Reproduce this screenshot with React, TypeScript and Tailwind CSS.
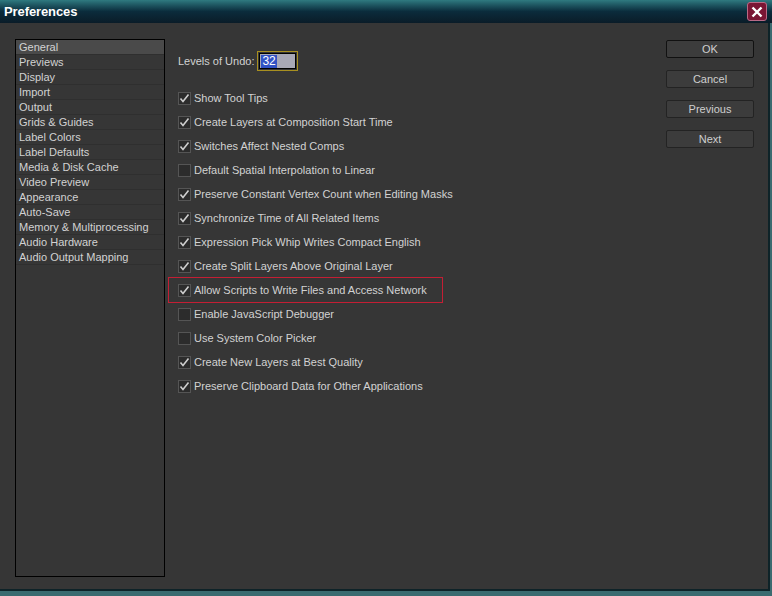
import { useState } from 'react';

const sections = [
  'General',
  'Previews',
  'Display',
  'Import',
  'Output',
  'Grids & Guides',
  'Label Colors',
  'Label Defaults',
  'Media & Disk Cache',
  'Video Preview',
  'Appearance',
  'Auto-Save',
  'Memory & Multiprocessing',
  'Audio Hardware',
  'Audio Output Mapping',
];

const options = [
  { label: 'Show Tool Tips', checked: true },
  { label: 'Create Layers at Composition Start Time', checked: true },
  { label: 'Switches Affect Nested Comps', checked: true },
  { label: 'Default Spatial Interpolation to Linear', checked: false },
  { label: 'Preserve Constant Vertex Count when Editing Masks', checked: true },
  { label: 'Synchronize Time of All Related Items', checked: true },
  { label: 'Expression Pick Whip Writes Compact English', checked: true },
  { label: 'Create Split Layers Above Original Layer', checked: true },
  { label: 'Allow Scripts to Write Files and Access Network', checked: true, highlight: true },
  { label: 'Enable JavaScript Debugger', checked: false },
  { label: 'Use System Color Picker', checked: false },
  { label: 'Create New Layers at Best Quality', checked: true },
  { label: 'Preserve Clipboard Data for Other Applications', checked: true },
];

const buttons = ['OK', 'Cancel', 'Previous', 'Next'];

const Checkbox = ({ checked }: { checked: boolean }) => (
  <span className="w-[13px] h-[13px] border border-[#555] bg-[#2c2c2c] flex items-center justify-center shrink-0">
    {checked && (
      <svg width="11" height="11" viewBox="0 0 11 11">
        <path d="M1.5 5.5 L4 8.5 L9.5 1.5" fill="none" stroke="#cfcfcf" strokeWidth="1.6" />
      </svg>
    )}
  </span>
);

export default function App() {
  const [selected, setSelected] = useState(0);

  return (
    <div
      className="w-[772px] h-[596px] bg-[#3b6b70] flex flex-col overflow-hidden text-[11px] text-[#d2d2d2]"
      style={{ fontFamily: '"Liberation Sans", Arial, sans-serif' }}
    >
      {/* title bar */}
      <div className="h-[23px] shrink-0 flex items-center justify-between pl-[4px] pr-[5px] bg-gradient-to-b from-[#2f7a80] via-[#0b2c3c] to-[#0a1c28]">
        <span className="text-white font-bold text-[13px] tracking-[-0.1px]">Preferences</span>
        <span className="w-[20px] h-[19px] rounded-[3px] bg-[#7a1534] border border-[#b86a86] flex items-center justify-center">
          <svg width="12" height="12" viewBox="0 0 12 12">
            <path d="M1.5 1.5 L10.5 10.5 M10.5 1.5 L1.5 10.5" stroke="#fff" strokeWidth="2.4" />
          </svg>
        </span>
      </div>

      {/* body */}
      <div className="w-[770px] h-[568px] bg-[#363636] border-r-2 border-b-2 border-[#0e2328] flex pl-[15px] pt-[16px]">
        <ul className="w-[150px] h-[538px] border border-black shrink-0">
          {sections.map((s, i) => (
            <li
              key={s}
              onClick={() => setSelected(i)}
              className={`h-[15px] leading-[14px] pl-[3px] border-b border-[#2f2f2f] cursor-default ${
                selected === i ? 'bg-[#4a4a4a]' : ''
              }`}
            >
              {s}
            </li>
          ))}
        </ul>

        <div className="w-[488px] ml-[13px] pt-[12px]">
          <div className="flex items-center h-[20px]">
            <span>Levels of Undo:</span>
            <span className="ml-[3px] w-[41px] h-[20px] border border-[#a89020] p-[1px]">
              <span className="w-full h-full border border-black bg-[#a8a8b6] flex items-center pl-[1px]">
                <span className="bg-[#3152c4] text-white text-[12px] leading-[13px] px-[1px]">32</span>
              </span>
            </span>
          </div>

          <div className="mt-[15px]">
            {options.map((o) => (
              <div key={o.label} className="relative h-[24px] flex items-center">
                {o.highlight && (
                  <span className="absolute left-[-10px] top-[-1px] w-[275px] h-[26px] border border-[#c41e34]" />
                )}
                <Checkbox checked={o.checked} />
                <span className="ml-[3px]">{o.label}</span>
              </div>
            ))}
          </div>
        </div>

        <div className="flex flex-col gap-[12px] pt-[1px]">
          {buttons.map((b) => (
            <button
              key={b}
              className={`w-[88px] h-[18px] rounded-[2px] bg-[#3c3c3c] text-[#cfcfcf] text-[11px] leading-[14px] border ${
                b === 'OK' ? 'border-[#111]' : 'border-[#232323]'
              }`}
            >
              {b}
            </button>
          ))}
        </div>
      </div>
    </div>
  );
}
